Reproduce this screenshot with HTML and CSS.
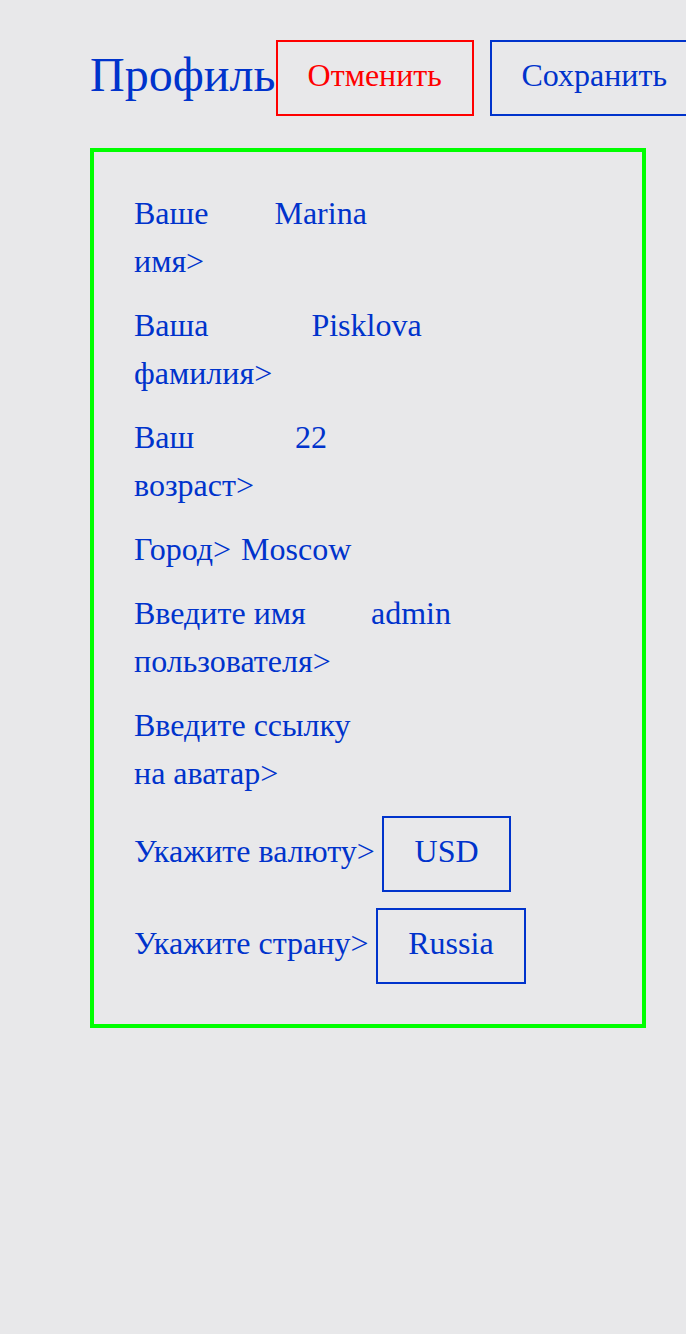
FILE: index.html
```html
<!DOCTYPE html>
<html lang="ru">
<head>
<meta charset="utf-8">
<title>Профиль</title>
<link rel="stylesheet" href="styles.css">
</head>
<body>
<main class="page">
  <header class="header">
    <h1 class="title">Профиль</h1>
    <button class="btn btn-cancel" type="button">Отменить</button>
    <button class="btn btn-save" type="button">Сохранить</button>
  </header>
  <form class="card">
    <div class="row"><span class="label">Ваше имя&gt;</span><span class="value">Marina</span></div>
    <div class="row"><span class="label">Ваша фамилия&gt;</span><span class="value">Pisklova</span></div>
    <div class="row"><span class="label">Ваш возраст&gt;</span><span class="value">22</span></div>
    <div class="row"><span class="label">Город&gt;</span><span class="value">Moscow</span></div>
    <div class="row"><span class="label">Введите имя пользователя&gt;</span><span class="value">admin</span></div>
    <div class="row"><span class="label">Введите ссылку на аватар&gt;</span><span class="value"></span></div>
    <div class="row-select"><span class="label">Укажите валюту&gt;</span><span class="select">USD</span></div>
    <div class="row-select"><span class="label">Укажите страну&gt;</span><span class="select">Russia</span></div>
  </form>
</main>
</body>
</html>
```
FILE: styles.css
```css
html, body {
  margin: 0;
  padding: 0;
  background: #e8e8ea;
  overflow: hidden;
}
body {
  font-family: "Liberation Serif", "Times New Roman", serif;
  color: #0033cc;
}
.page {
  padding: 40px 40px 0 90px;
}
.header {
  display: flex;
  align-items: center;
  gap: 16px;
  height: 76px;
}
.title {
  margin: 0 -15.5px 0 0;
  font-size: 48px;
  font-weight: normal;
  line-height: 70px;
  padding-bottom: 6px;
  white-space: nowrap;
  flex-shrink: 0;
}
.btn {
  flex-shrink: 0;
  font-family: inherit;
  font-size: 32px;
  line-height: 36px;
  padding: 15px 29.75px 21px;
  background: transparent;
  border: 2px solid;
  white-space: nowrap;
}
.btn-cancel {
  color: #ff0000;
  border-color: #ff0000;
}
.btn-save {
  color: #0033cc;
  border-color: #0033cc;
}
.card {
  margin-top: 32px;
  border: 4px solid #00ff00;
  padding: 40px;
  display: flex;
  flex-direction: column;
  gap: 16px;
}
.row {
  display: flex;
  align-items: flex-start;
  gap: 8px;
  font-size: 32px;
  line-height: 48px;
  margin-top: -3px;
  padding-bottom: 3px;
}
.value {
  flex: 0 1 383px;
  padding-left: 2px;
  min-height: 48px;
}
.row-select {
  display: flex;
  align-items: baseline;
  gap: 7.5px;
  font-size: 32px;
  line-height: 48px;
}
.label {
  flex: 0 1 auto;
}
.select {
  flex-shrink: 0;
  border: 2px solid #0033cc;
  padding: 15px 30.25px 21px;
  line-height: 36px;
}
```
